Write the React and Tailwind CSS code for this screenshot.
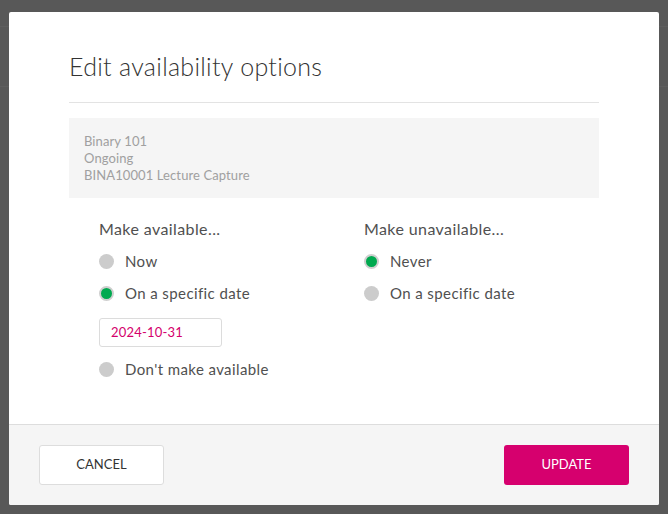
import React from "react";

function Radio({ checked, label }) {
  return (
    <div className="flex items-center h-[20px]">
      {checked ? (
        <span className="w-[15px] h-[15px] rounded-full bg-[#00a94f] border-[2px] border-[#cfcfcf] box-border" />
      ) : (
        <span className="w-[15px] h-[15px] rounded-full bg-[#cccccc]" />
      )}
      <span className="ml-[11px] text-[15px] text-[#505050] tracking-[0.4px]">{label}</span>
    </div>
  );
}

export default function App() {
  return (
    <div
      className="w-[668px] h-[514px] bg-[#585858] relative overflow-hidden"
      style={{ fontFamily: "Lato, 'Open Sans', sans-serif" }}
    >
      <div className="absolute left-0 right-0 top-[26px] h-[61px] border-y border-[#5e5e5e]" />
      <div className="absolute left-[9px] top-[12px] w-[650px] h-[493px] bg-white rounded-[2px] flex flex-col">
        <div className="flex-1 px-[60px] pt-[39px]">
          <h1 className="text-[25px] font-light text-[#333] leading-[30px] tracking-[0.3px]">
            Edit availability options
          </h1>
          <div className="mt-[21px] h-px bg-[#e3e3e3]" />
          <div className="mt-[15px] h-[80px] bg-[#f5f5f5] px-[15px] pt-[15px] text-[13px] leading-[17px] text-[#a0a0a0] tracking-[0.1px]">
            <div>Binary 101</div>
            <div>Ongoing</div>
            <div>BINA10001 Lecture Capture</div>
          </div>
          <div className="grid grid-cols-2">
            <div className="pl-[30px] pt-[20px]">
              <div className="text-[16px] text-[#505050] leading-[22px] tracking-[0.4px]">Make available...</div>
              <div className="mt-[11px] flex flex-col gap-[12px]">
                <Radio label="Now" />
                <Radio checked label="On a specific date" />
              </div>
              <div className="mt-[15px] w-[123px] h-[29px] border border-[#dcdcdc] rounded-[3px] px-[11px] flex items-center text-[13px] text-[#d4006c] tracking-[0.2px]">
                2024-10-31
              </div>
              <div className="mt-[12px]">
                <Radio label="Don't make available" />
              </div>
            </div>
            <div className="pl-[30px] pt-[20px]">
              <div className="text-[16px] text-[#505050] leading-[22px] tracking-[0.4px]">Make unavailable...</div>
              <div className="mt-[11px] flex flex-col gap-[12px]">
                <Radio checked label="Never" />
                <Radio label="On a specific date" />
              </div>
            </div>
          </div>
        </div>
        <div className="h-[81px] border-t border-[#dddddd] bg-[#f5f5f5] px-[30px] flex items-center justify-between rounded-b-[2px]">
          <button className="w-[125px] h-[40px] bg-white border border-[#dddddd] rounded-[3px] text-[13px] text-[#333] uppercase">
            Cancel
          </button>
          <button className="w-[125px] h-[40px] bg-[#d6006e] rounded-[3px] text-[13px] text-white uppercase">
            Update
          </button>
        </div>
      </div>
    </div>
  );
}
